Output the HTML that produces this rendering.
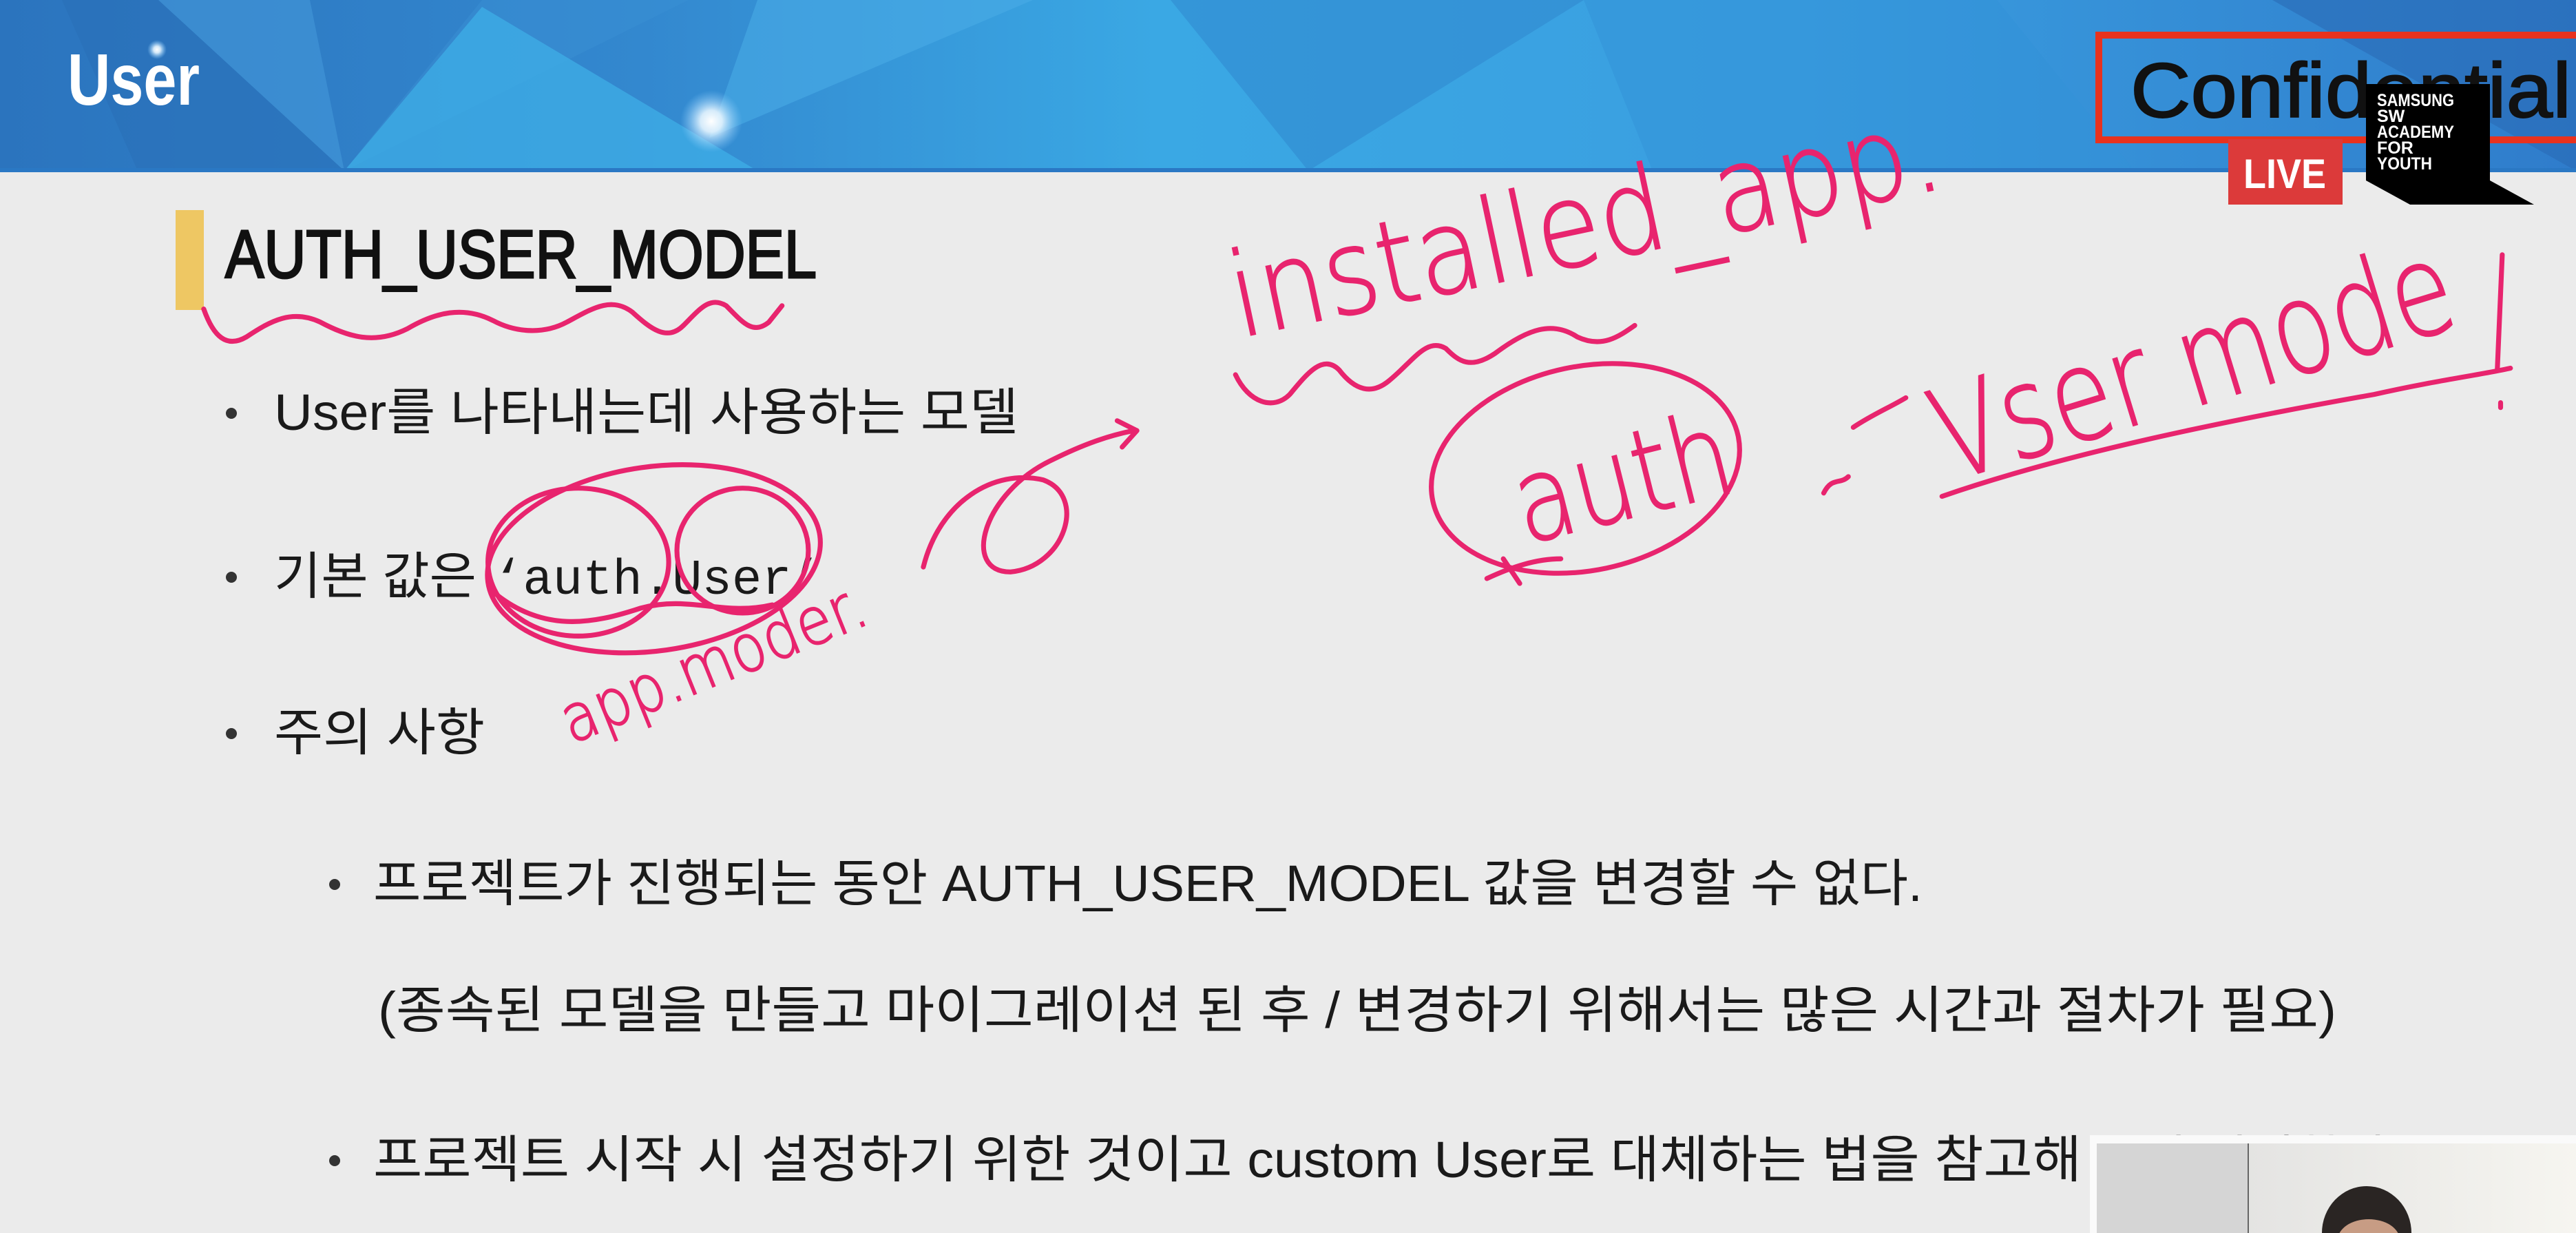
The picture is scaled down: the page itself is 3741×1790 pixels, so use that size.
<!DOCTYPE html>
<html><head><meta charset="utf-8"><style>
html,body{margin:0;padding:0;width:3741px;height:1790px;overflow:hidden;background:#ebebeb}
svg{display:block}
</style></head><body>
<svg width="3741" height="1790" viewBox="0 0 3741 1790" xmlns="http://www.w3.org/2000/svg">
<defs>
<linearGradient id="hg" x1="0" y1="0" x2="1" y2="0">
<stop offset="0" stop-color="#2b74be"/><stop offset="0.25" stop-color="#3388cf"/><stop offset="0.45" stop-color="#3aa8e4"/><stop offset="0.7" stop-color="#3a9ee0"/><stop offset="1" stop-color="#2f7ccb"/>
</linearGradient>
<radialGradient id="glow"><stop offset="0" stop-color="#fff"/><stop offset="0.35" stop-color="#e8f6ff" stop-opacity="0.9"/><stop offset="1" stop-color="#8fd0ff" stop-opacity="0"/></radialGradient>
<linearGradient id="vid" x1="0" y1="0" x2="1" y2="0"><stop offset="0" stop-color="#dcdcdc"/><stop offset="1" stop-color="#f6f5f0"/></linearGradient>
</defs>
<rect width="3741" height="1790" fill="#ebebeb"/>
<rect width="3741" height="248" fill="url(#hg)"/>
<polygon points="90,0 230,0 500,248 200,248" fill="#2a6fb8" opacity="0.6"/>
<polygon points="230,0 450,0 500,248" fill="#4498d8" opacity="0.6"/>
<polygon points="700,0 1000,0 500,248" fill="#3a8fd3" opacity="0.5"/>
<polygon points="700,10 1100,248 500,248" fill="#3fb0e8" opacity="0.7"/>
<polygon points="1100,0 1500,0 1030,200" fill="#49ace6" opacity="0.6"/>
<polygon points="1700,0 2300,0 1900,248" fill="#2d83cc" opacity="0.5"/>
<polygon points="2300,0 2900,0 3100,248 2400,248" fill="#3292d8" opacity="0.5"/>
<polygon points="3300,0 3741,0 3741,248" fill="#2a6bb5" opacity="0.6"/>
<rect y="244" width="3741" height="6" fill="#2a78c4"/>
<circle cx="1033" cy="176" r="45" fill="url(#glow)"/>
<circle cx="228" cy="72" r="14" fill="url(#glow)"/>
<text x="98" y="152" font-family="Liberation Sans, sans-serif" font-weight="bold" font-size="106" fill="#fff" textLength="192" lengthAdjust="spacingAndGlyphs">User</text>
<rect x="3048" y="51" width="700" height="152" fill="none" stroke="#e8321e" stroke-width="10"/>
<text x="3094" y="170" font-family="Liberation Sans, sans-serif" font-size="112" fill="#111" stroke="#111" stroke-width="2" textLength="640" lengthAdjust="spacingAndGlyphs">Confidential</text>
<rect x="3236" y="202" width="166" height="95" fill="#dc3a3a"/>
<text x="3258" y="273" font-family="Liberation Sans, sans-serif" font-weight="bold" font-size="60" fill="#fff" textLength="120" lengthAdjust="spacingAndGlyphs">LIVE</text>
<polygon points="3436,122 3616,122 3616,262 3680,297 3500,297 3436,262" fill="#000"/>
<g font-family="Liberation Sans, sans-serif" font-weight="bold" font-size="25" fill="#fff">
<text x="3452" y="154" textLength="112" lengthAdjust="spacingAndGlyphs">SAMSUNG</text>
<text x="3452" y="177">SW</text>
<text x="3452" y="200" textLength="112" lengthAdjust="spacingAndGlyphs">ACADEMY</text>
<text x="3452" y="223">FOR</text>
<text x="3452" y="246" textLength="80" lengthAdjust="spacingAndGlyphs">YOUTH</text>
</g>
<rect x="255" y="305" width="41" height="145" fill="#eec763"/>
<text x="327" y="403" font-family="Liberation Sans, sans-serif" font-size="98" fill="#111" stroke="#111" stroke-width="3" textLength="859" lengthAdjust="spacingAndGlyphs">AUTH_USER_MODEL</text>
<g font-family="Liberation Sans, 'Noto Sans CJK KR', sans-serif" font-size="74" fill="#1a1a1a">
<circle cx="336" cy="600" r="8" fill="#333"/>
<text x="398" y="624" textLength="1081" lengthAdjust="spacingAndGlyphs">User를 나타내는데 사용하는 모델</text>
<circle cx="336" cy="838" r="8" fill="#333"/>
<text x="398" y="862" textLength="294" lengthAdjust="spacingAndGlyphs">기본 값은</text>
<text x="716" y="862" font-family="Liberation Mono, monospace" font-size="72" textLength="477" lengthAdjust="spacingAndGlyphs">‘auth.User’</text>
<circle cx="336" cy="1065" r="8" fill="#333"/>
<text x="398" y="1089" textLength="306" lengthAdjust="spacingAndGlyphs">주의 사항</text>
<circle cx="486" cy="1284" r="8" fill="#333"/>
<text x="542" y="1308" textLength="2250" lengthAdjust="spacingAndGlyphs">프로젝트가 진행되는 동안 AUTH_USER_MODEL 값을 변경할 수 없다.</text>
<text x="549" y="1492" textLength="2844" lengthAdjust="spacingAndGlyphs">(종속된 모델을 만들고 마이그레이션 된 후 / 변경하기 위해서는 많은 시간과 절차가 필요)</text>
<circle cx="486" cy="1685" r="8" fill="#333"/>
<text x="542" y="1709" textLength="2481" lengthAdjust="spacingAndGlyphs">프로젝트 시작 시 설정하기 위한 것이고 custom User로 대체하는 법을 참고해</text>
<text x="3040" y="1709">보기 설정한다</text>
</g>
<rect x="3035" y="1648" width="706" height="142" fill="#fafafa"/>
<rect x="3045" y="1660" width="696" height="130" fill="url(#vid)"/>
<rect x="3045" y="1660" width="220" height="130" fill="#d5d5d5"/>
<rect x="3264" y="1660" width="2" height="130" fill="#666"/>
<ellipse cx="3437" cy="1790" rx="65" ry="68" fill="#2a2523"/>
<ellipse cx="3440" cy="1800" rx="45" ry="30" fill="#c79c84"/>
<g transform="scale(2.386)" fill="none" stroke="#e8246e" stroke-width="3" stroke-linecap="round" stroke-linejoin="round">
<path d="M124,188 C130,205 138,212 150,205 C165,195 178,188 195,196 C212,205 228,210 248,200 C265,190 282,186 300,195 C315,203 332,203 345,196 C360,188 372,180 385,190 C396,200 406,208 416,198 C426,188 432,180 442,186 C452,196 458,204 468,196 L476,186"/>
<ellipse cx="398" cy="340" rx="102" ry="56" transform="rotate(-8 398 340)"/>
<ellipse cx="352" cy="342" rx="55" ry="45"/>
<ellipse cx="452" cy="335" rx="40" ry="38"/>
<path d="M300,360 C330,385 360,380 390,370 C420,362 440,375 470,368"/>
<path d="M562,345 C572,305 605,285 635,292 C662,302 648,345 615,348 C585,348 598,300 640,280 C660,270 675,265 690,262 M680,256 L692,262 L683,272"/>
<path d="M752,228 C760,245 775,250 785,240 C795,228 805,215 815,225 C825,238 835,240 845,232 C860,220 868,205 880,212 C888,220 895,225 910,215 C930,200 945,195 960,205 C975,212 985,205 995,198"/>
<ellipse cx="965" cy="285" rx="95" ry="62" transform="rotate(-12 965 285)"/>
<path d="M905,352 C920,345 935,340 950,340 M915,340 L925,355"/>
<path d="M1110,300 C1115,290 1120,295 1125,290 M1128,260 C1140,252 1150,248 1160,242"/>
<path d="M1182,302 C1260,275 1360,255 1445,240 C1480,232 1510,228 1528,224"/>
<path d="M1523,155 L1520,225 M1522,245 L1522,248"/>
</g>
<g font-family="DejaVu Sans, sans-serif" font-weight="200" fill="#e8246e" stroke="#e8246e" stroke-width="2">
<text transform="translate(1800,490) rotate(-12)" font-size="170" textLength="1050" lengthAdjust="spacingAndGlyphs">installed_app.</text>
<text transform="translate(2215,790) rotate(-14)" font-size="170" textLength="320" lengthAdjust="spacingAndGlyphs">auth</text>
<text transform="translate(2830,700) rotate(-17)" font-size="185" textLength="780" lengthAdjust="spacingAndGlyphs">Vser mode</text>
<text transform="translate(830,1080) rotate(-22)" font-size="95" textLength="470" lengthAdjust="spacingAndGlyphs">app.moder.</text>
</g>
</svg>
</body></html>
